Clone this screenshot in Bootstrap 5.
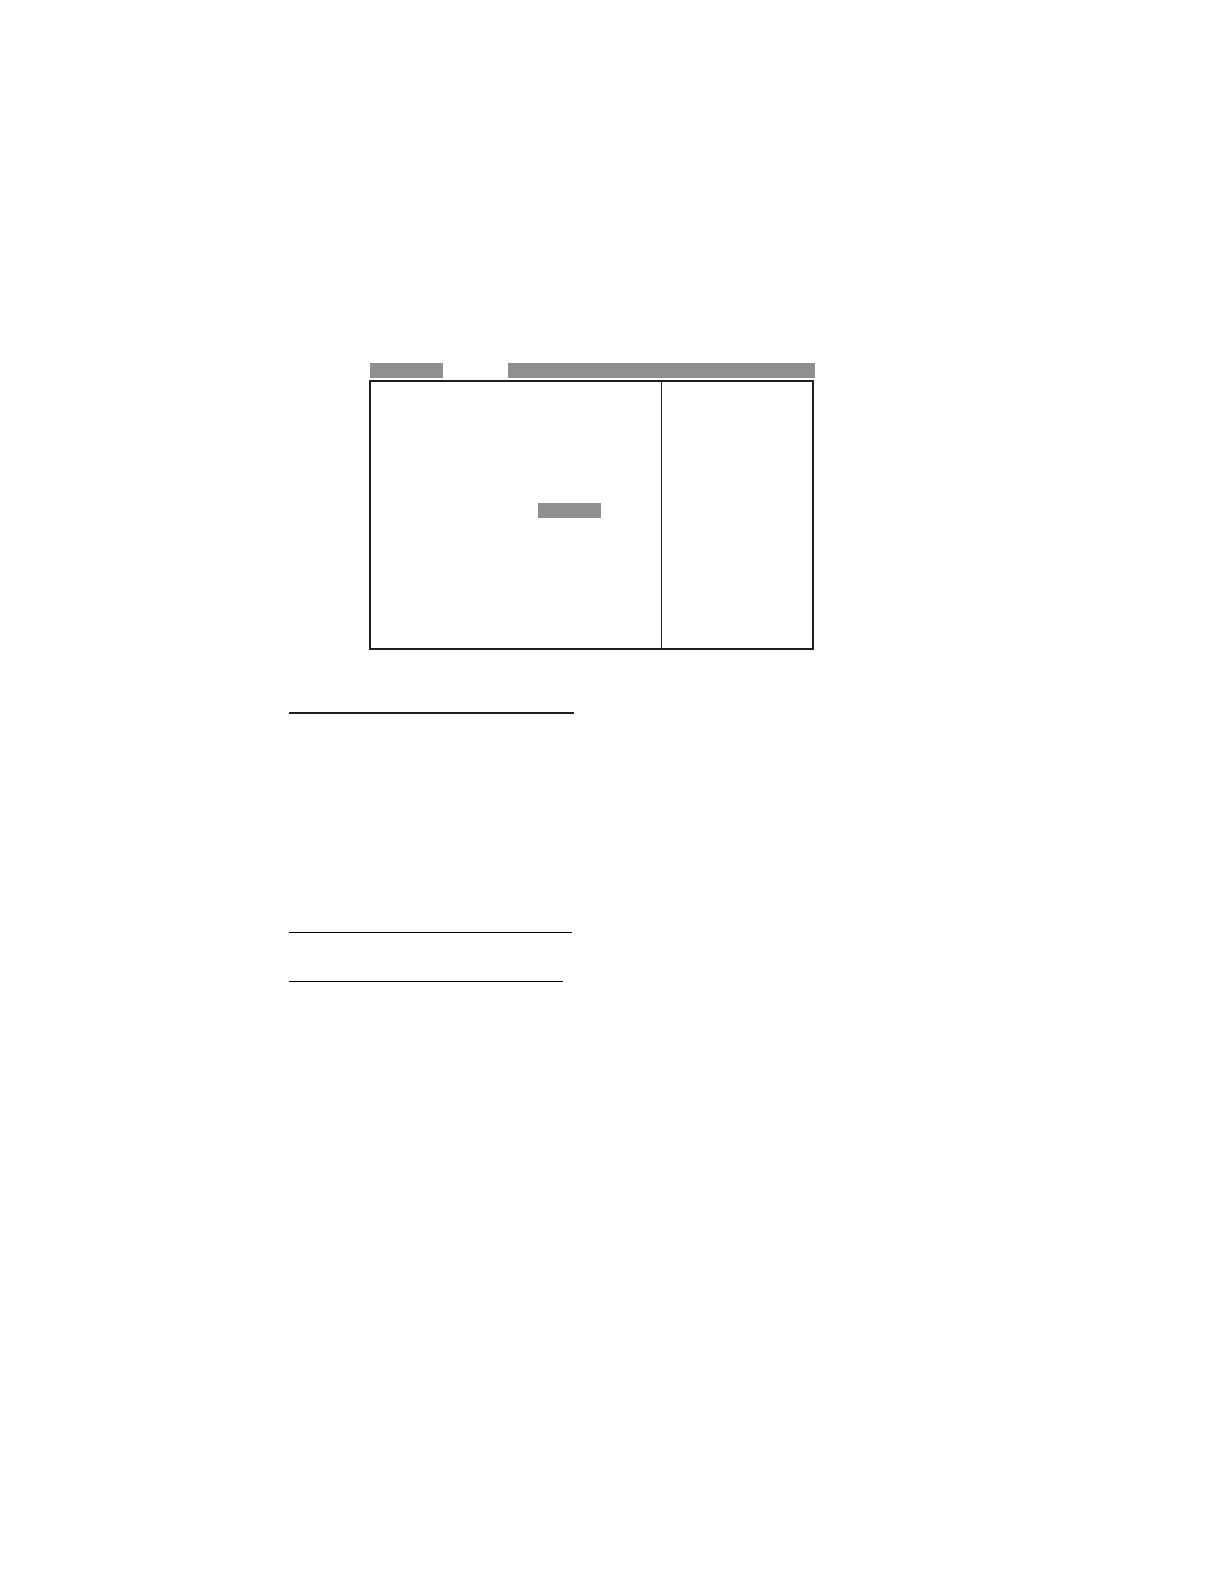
<!DOCTYPE html>
<html lang="en">
<head>
<meta charset="utf-8">
<meta name="viewport" content="width=device-width, initial-scale=1">
<title>Setup screen</title>
<link href="https://cdn.jsdelivr.net/npm/bootstrap@5.3.0/dist/css/bootstrap.min.css" rel="stylesheet">
<style>
  :root { --ink: #1f1d20; --bar: #8f8f8f; }
  .sheet { padding: 363px 24px 64px 289px; }
  .screen { max-width: 446px; margin: 0 0 62px 80px; }
  .bar { height: 15px; background: var(--bar); }
  .tab-start { width: 73px; }
  .tab-open { width: 65px; }
  .menu-strip { padding-left: 1px; margin-bottom: 2px; }
  .frame { border: 2px solid var(--ink); margin-right: 1px; min-height: 270px; }
  .help-pane { width: 151px; border-left: 1px solid var(--ink); }
  .options-pane { padding: 121px 60px 0 167px; }
  .rule { height: 1px; background: #000; }
  .rule-heading { height: 2px; max-width: 285px; background: var(--ink); margin-bottom: 218px; }
  .rule-first { max-width: 283px; margin-bottom: 48px; }
  .rule-second { max-width: 274px; }
</style>
</head>
<body class="bg-white">
<main class="sheet">
  <section class="screen" aria-label="Setup screen">
    <div class="menu-strip d-flex">
      <div class="bar tab-start"></div>
      <div class="tab-open"></div>
      <div class="bar flex-grow-1"></div>
    </div>
    <div class="frame d-flex">
      <div class="options-pane flex-grow-1"><div class="bar"></div></div>
      <div class="help-pane flex-shrink-0"></div>
    </div>
  </section>
  <div class="rule rule-heading"></div>
  <div class="rule rule-first"></div>
  <div class="rule rule-second"></div>
</main>
<script src="https://cdn.jsdelivr.net/npm/bootstrap@5.3.0/dist/js/bootstrap.bundle.min.js"></script>
</body>
</html>
